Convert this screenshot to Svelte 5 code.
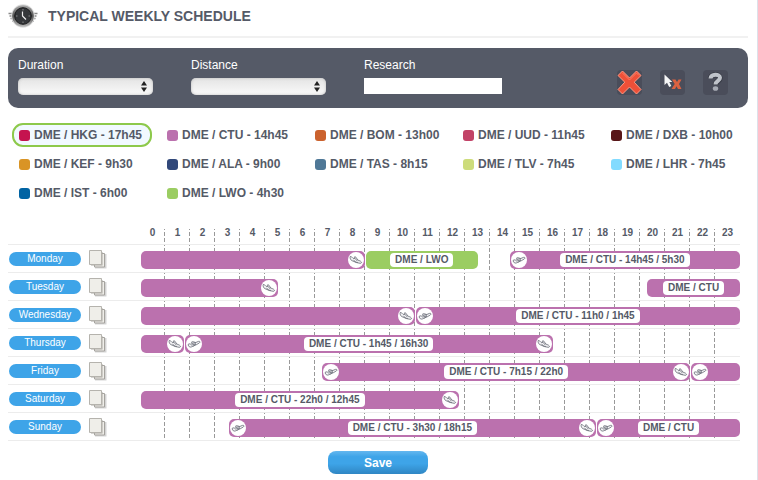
<script lang="ts">
    type Flight = {
        from: number;
        to: number;
        label?: string;
        color?: string;
        takeoff?: boolean;
        landing?: boolean;
    };

    const routes = [
        { name: 'DME / HKG - 17h45', color: '#c5134f' },
        { name: 'DME / CTU - 14h45', color: '#bb71ae' },
        { name: 'DME / BOM - 13h00', color: '#cb622e' },
        { name: 'DME / UUD - 11h45', color: '#c24367' },
        { name: 'DME / DXB - 10h00', color: '#581618' },
        { name: 'DME / KEF - 9h30', color: '#d99425' },
        { name: 'DME / ALA - 9h00', color: '#31487a' },
        { name: 'DME / TAS - 8h15', color: '#4f7897' },
        { name: 'DME / TLV - 7h45', color: '#cddc7b' },
        { name: 'DME / LHR - 7h45', color: '#82dbff' },
        { name: 'DME / IST - 6h00', color: '#0063a3' },
        { name: 'DME / LWO - 4h30', color: '#9bcd62' }
    ];

    // from / to are hours of the day, in quarter-hour steps
    const days: { name: string; flights: Flight[] }[] = [
        {
            name: 'Monday',
            flights: [
                { from: 0, to: 9, landing: true },
                { from: 9, to: 13.5, label: 'DME / LWO', color: '#9bcd62' },
                { from: 14.75, to: 24, label: 'DME / CTU - 14h45 / 5h30', takeoff: true }
            ]
        },
        {
            name: 'Tuesday',
            flights: [
                { from: 0, to: 5.5, landing: true },
                { from: 20.25, to: 24, label: 'DME / CTU' }
            ]
        },
        {
            name: 'Wednesday',
            flights: [
                { from: 0, to: 11, landing: true },
                { from: 11, to: 24, label: 'DME / CTU - 11h0 / 1h45', takeoff: true }
            ]
        },
        {
            name: 'Thursday',
            flights: [
                { from: 0, to: 1.75, landing: true },
                { from: 1.75, to: 16.5, label: 'DME / CTU - 1h45 / 16h30', takeoff: true, landing: true }
            ]
        },
        {
            name: 'Friday',
            flights: [
                { from: 7.25, to: 22, label: 'DME / CTU - 7h15 / 22h0', takeoff: true, landing: true },
                { from: 22, to: 24, takeoff: true }
            ]
        },
        {
            name: 'Saturday',
            flights: [{ from: 0, to: 12.75, label: 'DME / CTU - 22h0 / 12h45', landing: true }]
        },
        {
            name: 'Sunday',
            flights: [
                { from: 3.5, to: 18.25, label: 'DME / CTU - 3h30 / 18h15', takeoff: true, landing: true },
                { from: 18.25, to: 24, label: 'DME / CTU', takeoff: true }
            ]
        }
    ];

    const hours = Array.from({ length: 24 }, (_, i) => i);

    let selected = $state('DME / HKG - 17h45');
    let search = $state('');
</script>

{#snippet plane(landing: boolean)}
    <svg class="plane" viewBox="0 0 16 16" aria-hidden="true">
        <circle cx="8" cy="8" r="8" fill="#fff" />
        <g fill="#f4f4f6" stroke="#666973" stroke-width="0.8" stroke-linejoin="round">
            {#if landing}
                <path d="M2.2 4.5C3.4 4.1 4 5.4 5 6.3L7 6.4C6 4.6 6.7 4.3 7.9 5.2L9.8 8 12.5 9.2C14 10.2 13.7 11.4 12.2 11.3L8.6 10.6 3.8 8.6C2.6 8 1.8 6 2.2 4.5Z" />
                <path d="M5.5 7.8 7.2 9.9 9.8 10.6M7 6.4 9.5 9.2" fill="none" />
            {:else}
                <path d="M2.2 9C2 7.5 3.5 7.7 4.8 8.2L6.6 7.3C4.9 6.4 5.3 5.6 6.8 5.7L9.8 6.5 12.4 5.4C14 5 14.5 6.1 13.3 7L10.2 8.8 5.2 11C3.7 11.4 2.5 10.5 2.2 9Z" />
                <path d="M5.3 9.2 10 7.8 7.2 10.2M6.6 7.3 9.8 6.5" fill="none" />
            {/if}
        </g>
    </svg>
{/snippet}

{#snippet dropdown(id: string, label: string)}
    <div class="field">
        <label for={id}>{label}</label>
        <div class="select">
            <select {id}>
                <option value=""></option>
            </select>
            <svg viewBox="0 0 6 11" aria-hidden="true">
                <path d="M3 0 6 4.5H0ZM3 11 0 6.5H6Z" fill="#222" />
            </svg>
        </div>
    </div>
{/snippet}

<main>
    <header>
        <svg class="logo" viewBox="0 0 30 25" aria-hidden="true">
            <defs>
                <linearGradient id="ring" x1="0" y1="0" x2="0" y2="1">
                    <stop offset="0" stop-color="#aaa" />
                    <stop offset="0.5" stop-color="#555" />
                    <stop offset="1" stop-color="#bbb" />
                </linearGradient>
            </defs>
            <g stroke="#888" stroke-width="1.3">
                <path d="M0.5 9.5H29.5M1.5 12H28.5M2.5 14.5H27.5M4 17H26" />
            </g>
            <circle cx="15" cy="12" r="11.8" fill="#ddd" />
            <circle cx="15" cy="12" r="10.8" fill="url(#ring)" />
            <circle cx="15" cy="12" r="8.3" fill="#35373a" stroke="#1b1b1c" />
            <path d="M15 5V6.5M15 17.5V19M8 12H9.5M20.5 12H22" stroke="#888" />
            <path d="M14.5 7.5V12L18 15.5" fill="none" stroke="#eee" stroke-width="1.2" />
        </svg>
        <h1>TYPICAL WEEKLY SCHEDULE</h1>
    </header>

    <form class="filters" onsubmit={(e) => e.preventDefault()}>
        {@render dropdown('duration', 'Duration')}
        {@render dropdown('distance', 'Distance')}
        <div class="field">
            <label for="research">Research</label>
            <input id="research" type="text" bind:value={search} />
        </div>
        <div class="tools">
            <button type="button" aria-label="Delete all">
                <svg viewBox="0 0 25 25">
                    <path d="M5.5 1 12.5 8 19.5 1 24 5.5 17.2 12.2 24 19.5 19.5 24 12.5 17 5.5 24 1 19.5 7.8 12.2 1 5.5Z" fill="#ee5038" stroke="#ff9a84" />
                    <path d="M5.5 3 12.5 10 19.5 3 22 5.5" fill="none" stroke="#f87b63" />
                </svg>
            </button>
            <button type="button" aria-label="Delete selection">
                <svg viewBox="0 0 25 25">
                    <path d="M12 9.5H15.5L17 12 18.5 9.5H21.5L19 14 21.5 19H18L16.5 16.2 15 19H11.5L14.7 14Z" fill="#db6241" />
                    <path d="M4.5 4.5V15L7 12.8 9.2 17 11.3 16 9.3 12H12.3Z" fill="#f6f6f6" />
                </svg>
            </button>
            <button type="button" aria-label="Help">
                <svg viewBox="0 0 25 25">
                    <g fill="none" stroke="#373a44" stroke-width="5.5">
                        <path d="M7.5 8.5C7.5 3.5 17 3.5 17 8C17 11.5 12.5 11 12.5 15" />
                    </g>
                    <path d="M7.5 8.5C7.5 3.5 17 3.5 17 7.8C17 11 12.5 10.8 12.5 14.5" fill="none" stroke="#bfc3ca" stroke-width="4" />
                    <ellipse cx="12.5" cy="18.5" rx="2.7" ry="2.3" fill="#a8acb5" />
                </svg>
            </button>
        </div>
    </form>

    <div class="routes">
        {#each routes as route}
            <button
                type="button"
                class="route"
                class:selected={selected === route.name}
                onclick={() => (selected = route.name)}
            >
                <span class="swatch" style:background={route.color}></span>
                {route.name}
            </button>
        {/each}
    </div>

    <section class="schedule">
        <div class="hours">
            {#each hours as hour}
                <span>{hour}</span>
            {/each}
        </div>
        {#each days as day}
            <div class="day">
                <span class="day-name">{day.name}</span>
                <button type="button" class="copy" aria-label="Copy {day.name}">
                    <svg viewBox="0 0 18 19">
                        <path d="M6 4H17.5V18.5H6Z" fill="#d4d4d4" />
                        <path d="M5.5 3.5H15.5V17H5.5Z" fill="#efeee9" stroke="#a5a39e" />
                        <path d="M2 2H13.5V15.5H2Z" fill="#aaa8a3" />
                        <path d="M0.5 0.5H12.5V14.5H0.5Z" fill="#efeee9" stroke="#b5b3ad" />
                    </svg>
                </button>
                <div class="track">
                    {#each day.flights as flight}
                        <div
                            class="flight"
                            style:grid-column="{flight.from * 4 + 1} / {flight.to * 4 + 1}"
                            style:background={flight.color}
                        >
                            <span class="end">
                                {#if flight.takeoff}{@render plane(false)}{/if}
                            </span>
                            {#if flight.label}
                                <span class="flight-label">{flight.label}</span>
                            {/if}
                            <span class="end right">
                                {#if flight.landing}{@render plane(true)}{/if}
                            </span>
                        </div>
                    {/each}
                </div>
            </div>
        {/each}
    </section>

    <button type="button" class="save">Save</button>
</main>

<style>
    :global(body) {
        background: #fff;
    }

    main {
        box-sizing: border-box;
        min-height: 100vh;
        padding: 0 9px 6px 8px;
        border-right: 1px solid #dde1ea;
        color: #555a67;
        font-family: "Liberation Sans", Arial, sans-serif;
        font-size: 12px;
    }

    button {
        padding: 0;
        border: 0;
        background: none;
        color: inherit;
        font: inherit;
        cursor: pointer;
    }

    svg {
        display: block;
    }

    header {
        display: flex;
        align-items: center;
        gap: 10px;
        height: 32px;
        padding-bottom: 4px;
        border-bottom: 2px solid #f1f1f1;
    }

    .logo {
        width: 30px;
        height: 25px;
    }

    h1 {
        margin: 0;
        font-size: 14px;
        line-height: 16px;
    }

    .filters {
        display: flex;
        box-sizing: border-box;
        height: 60px;
        margin-top: 10px;
        padding: 9px 20px 0 10px;
        border-radius: 10px;
        background: #555a67;
        color: #fff;
    }

    .field {
        width: 173px;
    }

    .field label {
        display: block;
        margin-bottom: 5px;
        line-height: 16px;
    }

    .select {
        position: relative;
        width: 135px;
    }

    .select select {
        display: block;
        width: 100%;
        height: 17px;
        border: 0;
        border-radius: 5px;
        background: linear-gradient(#e4e4e4, #fafafa);
        box-shadow: inset 0 0 3px #bbb;
        appearance: none;
    }

    .select svg {
        position: absolute;
        top: 3px;
        right: 6px;
        width: 6px;
        height: 11px;
        pointer-events: none;
    }

    .field input {
        display: block;
        box-sizing: border-box;
        width: 138px;
        height: 16px;
        padding: 0 4px;
        border: 0;
        background: #fff;
        font: inherit;
    }

    .tools {
        display: flex;
        gap: 18px;
        margin: 13px 0 0 auto;
    }

    .tools button {
        width: 25px;
        height: 25px;
        border-radius: 4px;
        background: #4a4d5a;
    }

    .routes {
        display: grid;
        grid-template-columns: repeat(5, 20%);
        justify-items: start;
        gap: 5px 0;
        margin: 15px -4px 0 4px;
    }

    .route {
        display: flex;
        align-items: center;
        gap: 4px;
        box-sizing: border-box;
        height: 24px;
        padding: 0 8px 0 5px;
        border: 2px solid transparent;
        border-radius: 11px;
        font-weight: bold;
        white-space: nowrap;
    }

    .route.selected {
        border-color: #8dc94b;
        background: #f1f9ff;
    }

    .swatch {
        width: 11px;
        height: 11px;
        border-radius: 3px;
    }

    .schedule {
        margin: 24px 8px 0 0;
        border-bottom: 1px solid #ececec;
    }

    .hours,
    .track {
        display: grid;
        /* dashed hour lines, none after the last hour */
        background:
            linear-gradient(#fff, #fff) right / 2px 100% no-repeat,
            repeating-linear-gradient(transparent 0 1px, #fff 1px 3px, transparent 3px 6px),
            linear-gradient(to left, #999 1px, transparent 1px) 0 0 / calc(100% / 24) 100%;
    }

    .hours {
        grid-template-columns: repeat(24, 1fr);
        height: 15px;
        margin-left: 132px;
        font-size: 10px;
        font-weight: bold;
        line-height: 7px;
        text-align: center;
    }

    .day {
        display: flex;
        height: 27px;
        border-top: 1px solid #ececec;
    }

    .day-name {
        width: 72px;
        height: 14px;
        margin: 7px 8px 0 1px;
        border-radius: 7px;
        background: #3ea4e8;
        color: #fff;
        font-size: 10px;
        line-height: 14px;
        text-align: center;
    }

    .copy {
        width: 18px;
        height: 19px;
        margin: 5px 33px 0 0;
    }

    .track {
        flex: 1;
        grid-template-columns: repeat(96, minmax(0, 1fr));
    }

    .flight {
        display: grid;
        grid-row: 1;
        grid-template-columns: 1fr auto 1fr;
        align-items: center;
        height: 18px;
        margin: 6px 0 0 1px;
        border-radius: 5px;
        background: #bb71ae;
    }

    .flight-label {
        padding: 0 5px;
        border-radius: 4px;
        background: #fff;
        font-size: 10px;
        font-weight: bold;
        line-height: 14px;
        white-space: nowrap;
    }

    .end {
        display: flex;
        padding: 0 1px;
    }

    .end.right {
        grid-column: 3;
        justify-content: flex-end;
    }

    .plane {
        width: 16px;
        height: 16px;
    }

    .save {
        display: block;
        width: 100px;
        height: 23px;
        margin: 10px auto 0;
        border-radius: 8px;
        background: linear-gradient(#64b7ef, #3ea4e8 25%, #3ea4e8 55%, #2f86c3);
        color: #fff;
        font-weight: bold;
    }
</style>
